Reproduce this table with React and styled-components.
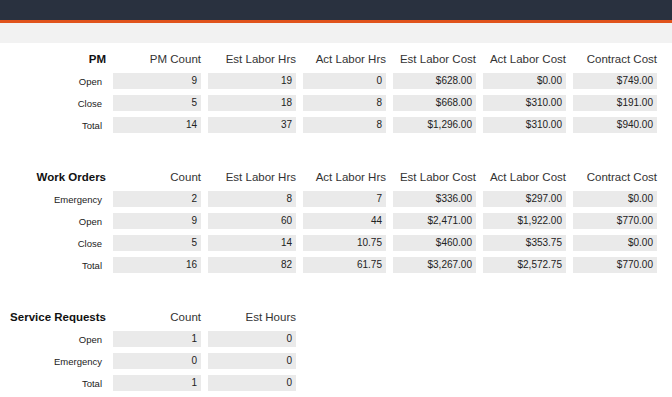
import React from "react";
import styled, { createGlobalStyle } from "styled-components";

const GlobalStyle = createGlobalStyle`
  body {
    margin: 0;
    background: #fff;
    font-family: "Liberation Sans", Arial, sans-serif;
    color: #222;
  }
`;

const TopBar = styled.div`
  height: 20px;
  background-color: #29313f;
  border-bottom: 3px solid #e0531c;
`;

const SubBar = styled.div`
  height: 20px;
  background-color: #f2f2f2;
`;

const Content = styled.div`
  padding-top: 5px;
  display: flex;
  flex-direction: column;
  gap: 30px;
`;

const Section = styled.div`
  display: grid;
  grid-template-columns: ${(p) => p.$cols};
  grid-auto-rows: 22px;
  column-gap: 7px;
  align-items: center;
`;

const Title = styled.div`
  font-size: 11.5px;
  font-weight: bold;
  text-align: right;
  color: #111;
`;

const Head = styled.div`
  font-size: 11.5px;
  text-align: right;
  color: #333;
`;

const Label = styled.div`
  font-size: 9.5px;
  text-align: right;
  padding-right: 4px;
  color: #222;
`;

const Cell = styled.div`
  height: 16px;
  line-height: 16px;
  background-color: #eaeaea;
  font-size: 10px;
  text-align: right;
  padding-right: 4px;
  color: #222;
`;

const WIDE = "106px 88px 88px 83px 83px 83px 84px";

const pm = {
  title: "PM",
  heads: ["PM Count", "Est Labor Hrs", "Act Labor Hrs", "Est Labor Cost", "Act Labor Cost", "Contract Cost"],
  rows: [
    ["Open", "9", "19", "0", "$628.00", "$0.00", "$749.00"],
    ["Close", "5", "18", "8", "$668.00", "$310.00", "$191.00"],
    ["Total", "14", "37", "8", "$1,296.00", "$310.00", "$940.00"],
  ],
};

const workOrders = {
  title: "Work Orders",
  heads: ["Count", "Est Labor Hrs", "Act Labor Hrs", "Est Labor Cost", "Act Labor Cost", "Contract Cost"],
  rows: [
    ["Emergency", "2", "8", "7", "$336.00", "$297.00", "$0.00"],
    ["Open", "9", "60", "44", "$2,471.00", "$1,922.00", "$770.00"],
    ["Close", "5", "14", "10.75", "$460.00", "$353.75", "$0.00"],
    ["Total", "16", "82", "61.75", "$3,267.00", "$2,572.75", "$770.00"],
  ],
};

const serviceRequests = {
  title: "Service Requests",
  heads: ["Count", "Est Hours"],
  rows: [
    ["Open", "1", "0"],
    ["Emergency", "0", "0"],
    ["Total", "1", "0"],
  ],
};

const Summary = ({ data, cols }) => (
  <Section $cols={cols}>
    <Title>{data.title}</Title>
    {data.heads.map((h) => (
      <Head key={h}>{h}</Head>
    ))}
    {data.rows.map((row) => (
      <React.Fragment key={row[0]}>
        <Label>{row[0]}</Label>
        {row.slice(1).map((v, i) => (
          <Cell key={i}>{v}</Cell>
        ))}
      </React.Fragment>
    ))}
  </Section>
);

const App = () => (
  <>
    <GlobalStyle />
    <TopBar />
    <SubBar />
    <Content>
      <Summary data={pm} cols={WIDE} />
      <Summary data={workOrders} cols={WIDE} />
      <Summary data={serviceRequests} cols="106px 88px 88px" />
    </Content>
  </>
);

export default App;
